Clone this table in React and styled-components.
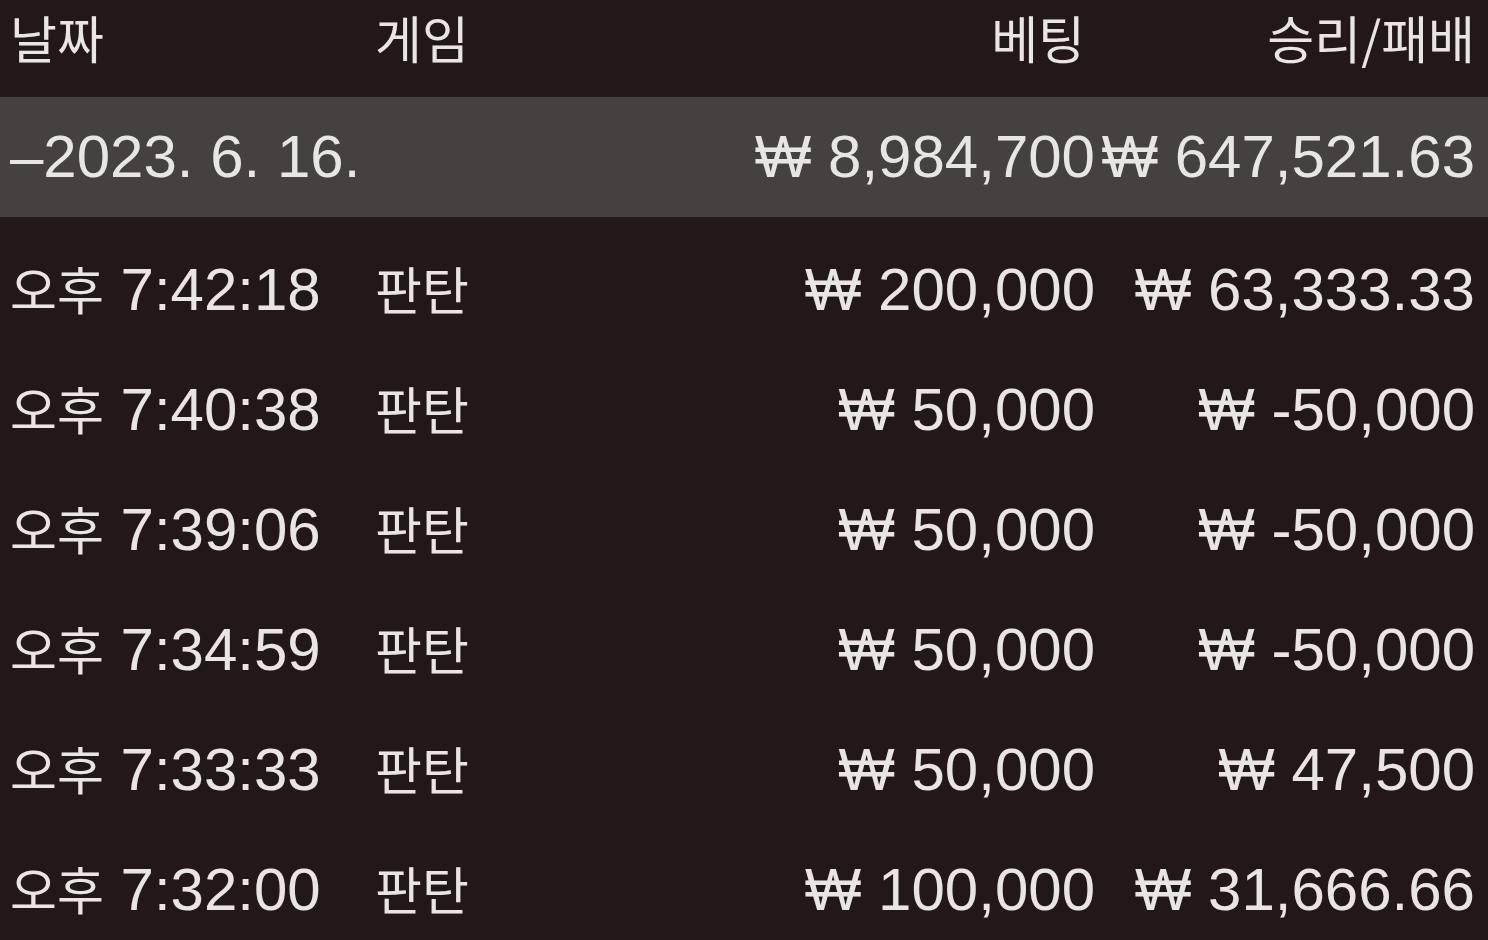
import styled, { createGlobalStyle } from 'styled-components';

const Global = createGlobalStyle`
  *, *::before, *::after {
    box-sizing: border-box;
  }
  html, body {
    margin: 0;
    padding: 0;
    background: #221819;
  }
  body {
    font-family: "Liberation Sans", "Noto Sans CJK KR", sans-serif;
    color: #e9e5e5;
  }
`;

const Page = styled.div`
  width: 1488px;
  height: 940px;
  overflow: hidden;
  background: #221819;
`;

const Row = styled.div`
  display: grid;
  grid-template-columns: 365px 1fr 360px 380px;
  align-items: center;
  height: ${p => p.$h || 120}px;
  padding: 0 13px 0 10px;
  background: ${p => p.$active ? '#46403f' : 'transparent'};
  font-size: 60px;
  line-height: 1.2;
  white-space: nowrap;
`;

const Body = styled.div`
  padding-top: 13px;
`;

const Cell = styled.div`
  text-align: ${p => p.$right ? 'right' : 'left'};
  padding-right: ${p => p.$pad || 0}px;
`;

const Ko = styled.span`
  font-family: "Noto Sans CJK KR", sans-serif;
  font-size: 51px;
`;

const Head = styled(Row)`
  padding-bottom: 20px;
`;

const rows = [
  ['7:42:18', '200,000', '63,333.33'],
  ['7:40:38', '50,000', '-50,000'],
  ['7:39:06', '50,000', '-50,000'],
  ['7:34:59', '50,000', '-50,000'],
  ['7:33:33', '50,000', '47,500'],
  ['7:32:00', '100,000', '31,666.66'],
];

export default function App() {
  return (
    <Page>
      <Global />
      <Head $h={97}>
        <Cell><Ko>날짜</Ko></Cell>
        <Cell><Ko>게임</Ko></Cell>
        <Cell $right $pad={10}><Ko>베팅</Ko></Cell>
        <Cell $right><Ko>승리/패배</Ko></Cell>
      </Head>
      <Row $active>
        <Cell>–2023. 6. 16.</Cell>
        <Cell />
        <Cell $right>₩ 8,984,700</Cell>
        <Cell $right>₩ 647,521.63</Cell>
      </Row>
      <Body>
        {rows.map(r => (
          <Row key={r[0]}>
            <Cell><Ko>오후</Ko> {r[0]}</Cell>
            <Cell><Ko>판탄</Ko></Cell>
            <Cell $right>₩ {r[1]}</Cell>
            <Cell $right>₩ {r[2]}</Cell>
          </Row>
        ))}
      </Body>
    </Page>
  );
}
